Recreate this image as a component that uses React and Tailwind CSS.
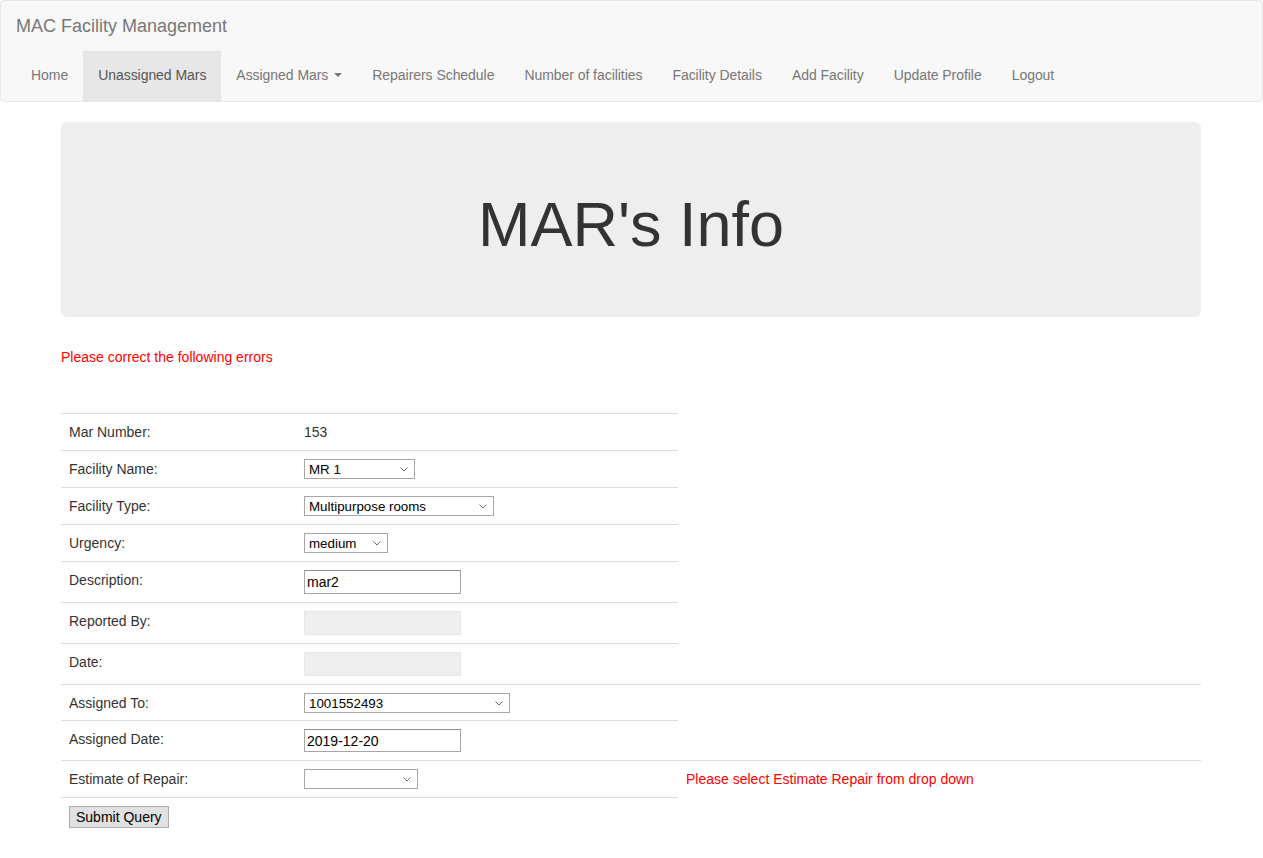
const NAV = [
  { label: 'Home' },
  { label: 'Unassigned Mars', active: true },
  { label: 'Assigned Mars', caret: true },
  { label: 'Repairers Schedule' },
  { label: 'Number of facilities' },
  { label: 'Facility Details' },
  { label: 'Add Facility' },
  { label: 'Update Profile' },
  { label: 'Logout' },
]

function Chevron() {
  return (
    <svg width="8" height="5" viewBox="0 0 8 5" className="shrink-0">
      <polyline points="0.5,0.5 4,4 7.5,0.5" fill="none" stroke="#6b6b6b" strokeWidth="1" />
    </svg>
  )
}

function FakeSelect({ value, width }) {
  return (
    <div
      className="flex items-center justify-between h-5 border border-[#a6a6a6] bg-white pl-1 pr-[6px] text-[13.33px] leading-none text-black"
      style={{ width }}
    >
      <span>{value}</span>
      <Chevron />
    </div>
  )
}

function TextInput({ value, height = 'h-6' }) {
  return (
    <div className={`flex items-center w-[157px] ${height} border border-[#a6a6a6] border-t-[#8f8f8f] bg-white px-[2px] text-[14px] leading-none text-black`}>
      {value}
    </div>
  )
}

function DisabledInput() {
  return <div className="w-[157px] h-6 border border-[#e6e6e6] bg-[#efefef]" />
}

const td = 'border-t border-[#dddddd] px-2 pt-2 align-top leading-5'

function Row({ label, children, extra, tight }) {
  const pb = tight ? 'pb-[7px]' : 'pb-2'
  return (
    <tr>
      <td className={`${td} ${pb} w-[235px]`}>{label}</td>
      <td className={`${td} ${pb} w-[382px]`}>{children}</td>
      {extra !== undefined && <td className={`${td} ${pb} text-[#ff0000]`}>{extra}</td>}
    </tr>
  )
}

export default function App() {
  return (
    <div className="min-h-screen bg-white text-[14px] leading-5 text-[#333333] font-['Liberation_Sans',Arial,sans-serif]">
      {/* Navbar */}
      <div className="border border-[#e7e7e7] bg-[#f8f8f8] rounded mb-5">
        <div className="h-[50px] px-[15px] py-[15px] text-[18px] leading-5 text-[#777777]">
          MAC Facility Management
        </div>
        <ul className="flex px-[15px]">
          {NAV.map((n) => (
            <li
              key={n.label}
              className={`flex items-center px-[15px] pt-[14px] pb-4 leading-5 tracking-[-0.05px] ${n.active ? 'bg-[#e7e7e7] text-[#555555]' : 'text-[#777777]'}`}
            >
              {n.label}
              {n.caret && (
                <span className="ml-[6px] inline-block w-0 h-0 border-x-4 border-x-transparent border-t-4 border-t-[#777777]" />
              )}
            </li>
          ))}
        </ul>
      </div>

      <div className="w-[1140px] ml-[61px]">
        {/* Jumbotron */}
        <div className="bg-[#eeeeee] rounded-md py-12 mb-[30px] text-center">
          <h1 className="mt-5 mb-[10px] text-[63px] leading-[1.1] font-medium text-[#333333]">MAR's Info</h1>
        </div>

        <p className="text-[#ff0000]">Please correct the following errors</p>

        <table className="mt-[46px] w-full border-collapse table-fixed">
          <colgroup>
            <col className="w-[235px]" />
            <col className="w-[382px]" />
            <col />
          </colgroup>
          <tbody>
            <Row label="Mar Number:">153</Row>
            <Row label="Facility Name:">
              <FakeSelect value="MR 1" width={111} />
            </Row>
            <Row label="Facility Type:">
              <FakeSelect value="Multipurpose rooms" width={190} />
            </Row>
            <Row label="Urgency:">
              <FakeSelect value="medium" width={84} />
            </Row>
            <Row label="Description:">
              <TextInput value="mar2" />
            </Row>
            <Row label="Reported By:">
              <DisabledInput />
            </Row>
            <Row label="Date:">
              <DisabledInput />
            </Row>
            <Row label="Assigned To:" extra="" tight>
              <FakeSelect value="1001552493" width={206} />
            </Row>
            <Row label="Assigned Date:">
              <TextInput value="2019-12-20" height="h-[23px]" />
            </Row>
            <Row label="Estimate of Repair:" extra="Please select Estimate Repair from drop down">
              <FakeSelect value="" width={114} />
            </Row>
            <tr>
              <td className={`${td} pb-2`}>
                <button className="h-[22px] px-[6px] border border-[#adadad] bg-[#e1e1e1] text-[14px] leading-none text-black">
                  Submit Query
                </button>
              </td>
              <td className={`${td} pb-2`} />
            </tr>
          </tbody>
        </table>
      </div>
    </div>
  )
}
